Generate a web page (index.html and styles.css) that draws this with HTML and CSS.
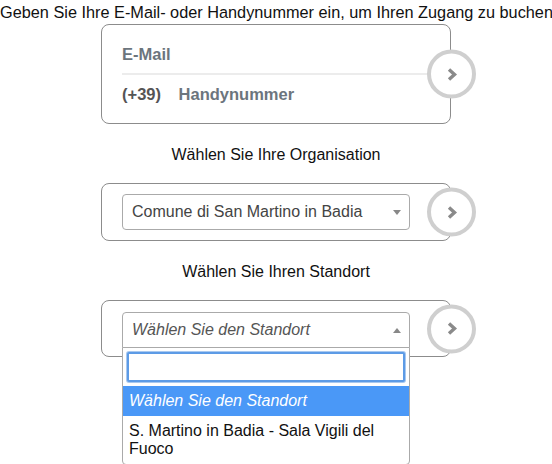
FILE: index.html
```html
<!DOCTYPE html>
<html lang="de">
<head>
    <meta charset="UTF-8">
    <meta name="viewport" content="width=device-width, initial-scale=1.0">
    <title>Zugang buchen</title>
    <link rel="stylesheet" href="styles.css">
</head>
<body>
    <p class="title">Geben Sie Ihre E-Mail- oder Handynummer ein, um Ihren Zugang zu buchen</p>

    <div class="step">
        <div class="card card-login">
            <div class="field">E-Mail</div>
            <div class="field field-phone"><span class="prefix">(+39)</span> Handynummer</div>
        </div>
        <button class="next" type="button" aria-label="Weiter">
            <svg width="12" height="14" viewBox="0 0 12 14"><polyline points="3,2 8.5,7 3,12" fill="none" stroke="#8a8a8a" stroke-width="3.4"/></svg>
        </button>
    </div>

    <p class="label">Wählen Sie Ihre Organisation</p>

    <div class="step">
        <div class="card card-select">
            <div class="select">
                <span class="select-value">Comune di San Martino in Badia</span>
                <span class="select-arrow"></span>
            </div>
        </div>
        <button class="next" type="button" aria-label="Weiter">
            <svg width="12" height="14" viewBox="0 0 12 14"><polyline points="3,2 8.5,7 3,12" fill="none" stroke="#8a8a8a" stroke-width="3.4"/></svg>
        </button>
    </div>

    <p class="label">Wählen Sie Ihren Standort</p>

    <div class="step">
        <div class="card card-select card-open">
            <div class="select select-open">
                <span class="select-value placeholder">Wählen Sie den Standort</span>
                <span class="select-arrow up"></span>
                <div class="dropdown">
                    <div class="search"><input class="search-field" type="text" autofocus></div>
                    <ul class="options">
                        <li class="option highlighted placeholder">Wählen Sie den Standort</li>
                        <li class="option">S. Martino in Badia - Sala Vigili del Fuoco</li>
                    </ul>
                </div>
            </div>
        </div>
        <button class="next" type="button" aria-label="Weiter">
            <svg width="12" height="14" viewBox="0 0 12 14"><polyline points="3,2 8.5,7 3,12" fill="none" stroke="#8a8a8a" stroke-width="3.4"/></svg>
        </button>
    </div>
</body>
</html>
```

FILE: styles.css
```css
html, body {
    min-height: 100%;
}

body {
    margin: 0;
    min-height: 100vh;
    background: #fff;
    color: #111;
    font-family: "Liberation Sans", Arial, Helvetica, sans-serif;
    font-size: 16px;
}

.title {
    margin: 3px 0 0;
    font-size: 16.3px;
    line-height: 18px;
    text-align: center;
    white-space: nowrap;
}

.label {
    margin: 22px 0 0;
    line-height: 18px;
    text-align: center;
}

.step {
    position: relative;
    width: 350px;
    margin: 3px auto 0;
}

.label + .step {
    margin-top: 19px;
}

.card {
    border: 1px solid #8c8c8c;
    border-radius: 8px;
    padding: 10px 20px;
}

.card-select {
    padding-right: 40px;
}

.card-open {
    padding: 11px 40px 8px 20px;
}

.field {
    height: 38px;
    line-height: 38px;
    font-weight: bold;
    font-size: 16.5px;
    color: #6c757d;
}

.field:first-child {
    border-bottom: 2px solid #ececec;
}

.prefix {
    color: #555;
    margin-right: 13px;
}

.next {
    position: absolute;
    right: -25px;
    top: 50%;
    transform: translateY(-50%);
    width: 49px;
    height: 49px;
    padding: 0;
    border: 4px solid #cfcfcf;
    border-radius: 50%;
    background: #fff;
    display: flex;
    align-items: center;
    justify-content: center;
    cursor: pointer;
}

.select {
    position: relative;
    height: 34px;
    border: 1px solid #aaa;
    border-radius: 4px;
    display: flex;
    align-items: center;
    padding: 0 8px 0 9px;
    color: #444;
}

.select-open {
    border-radius: 4px 4px 0 0;
}

.select-value {
    flex: 1;
}

.placeholder {
    font-style: italic;
}

.select-value.placeholder {
    color: #555;
}

.select-arrow {
    width: 0;
    height: 0;
    border-left: 4px solid transparent;
    border-right: 4px solid transparent;
    border-top: 5px solid #888;
}

.select-arrow.up {
    border-top: none;
    border-bottom: 5px solid #888;
}

.dropdown {
    position: absolute;
    left: -1px;
    right: -1px;
    top: 34px;
    background: #fff;
    border: 1px solid #aaa;
    border-radius: 0 0 4px 4px;
    z-index: 2;
}

.search {
    padding: 4px;
}

.search-field {
    display: block;
    width: 100%;
    box-sizing: border-box;
    height: 30px;
    margin: 0;
    border: 2px solid #5d9be6;
    border-radius: 2px;
    box-shadow: 0 0 0 1px #a9c9f0;
    outline: none;
    font: inherit;
}

.options {
    list-style: none;
    margin: 0;
    padding: 0;
}

.option {
    padding: 6px;
    line-height: 18px;
    color: #111;
}

.option.highlighted {
    background: #4a98f7;
    color: #fff;
}
```
